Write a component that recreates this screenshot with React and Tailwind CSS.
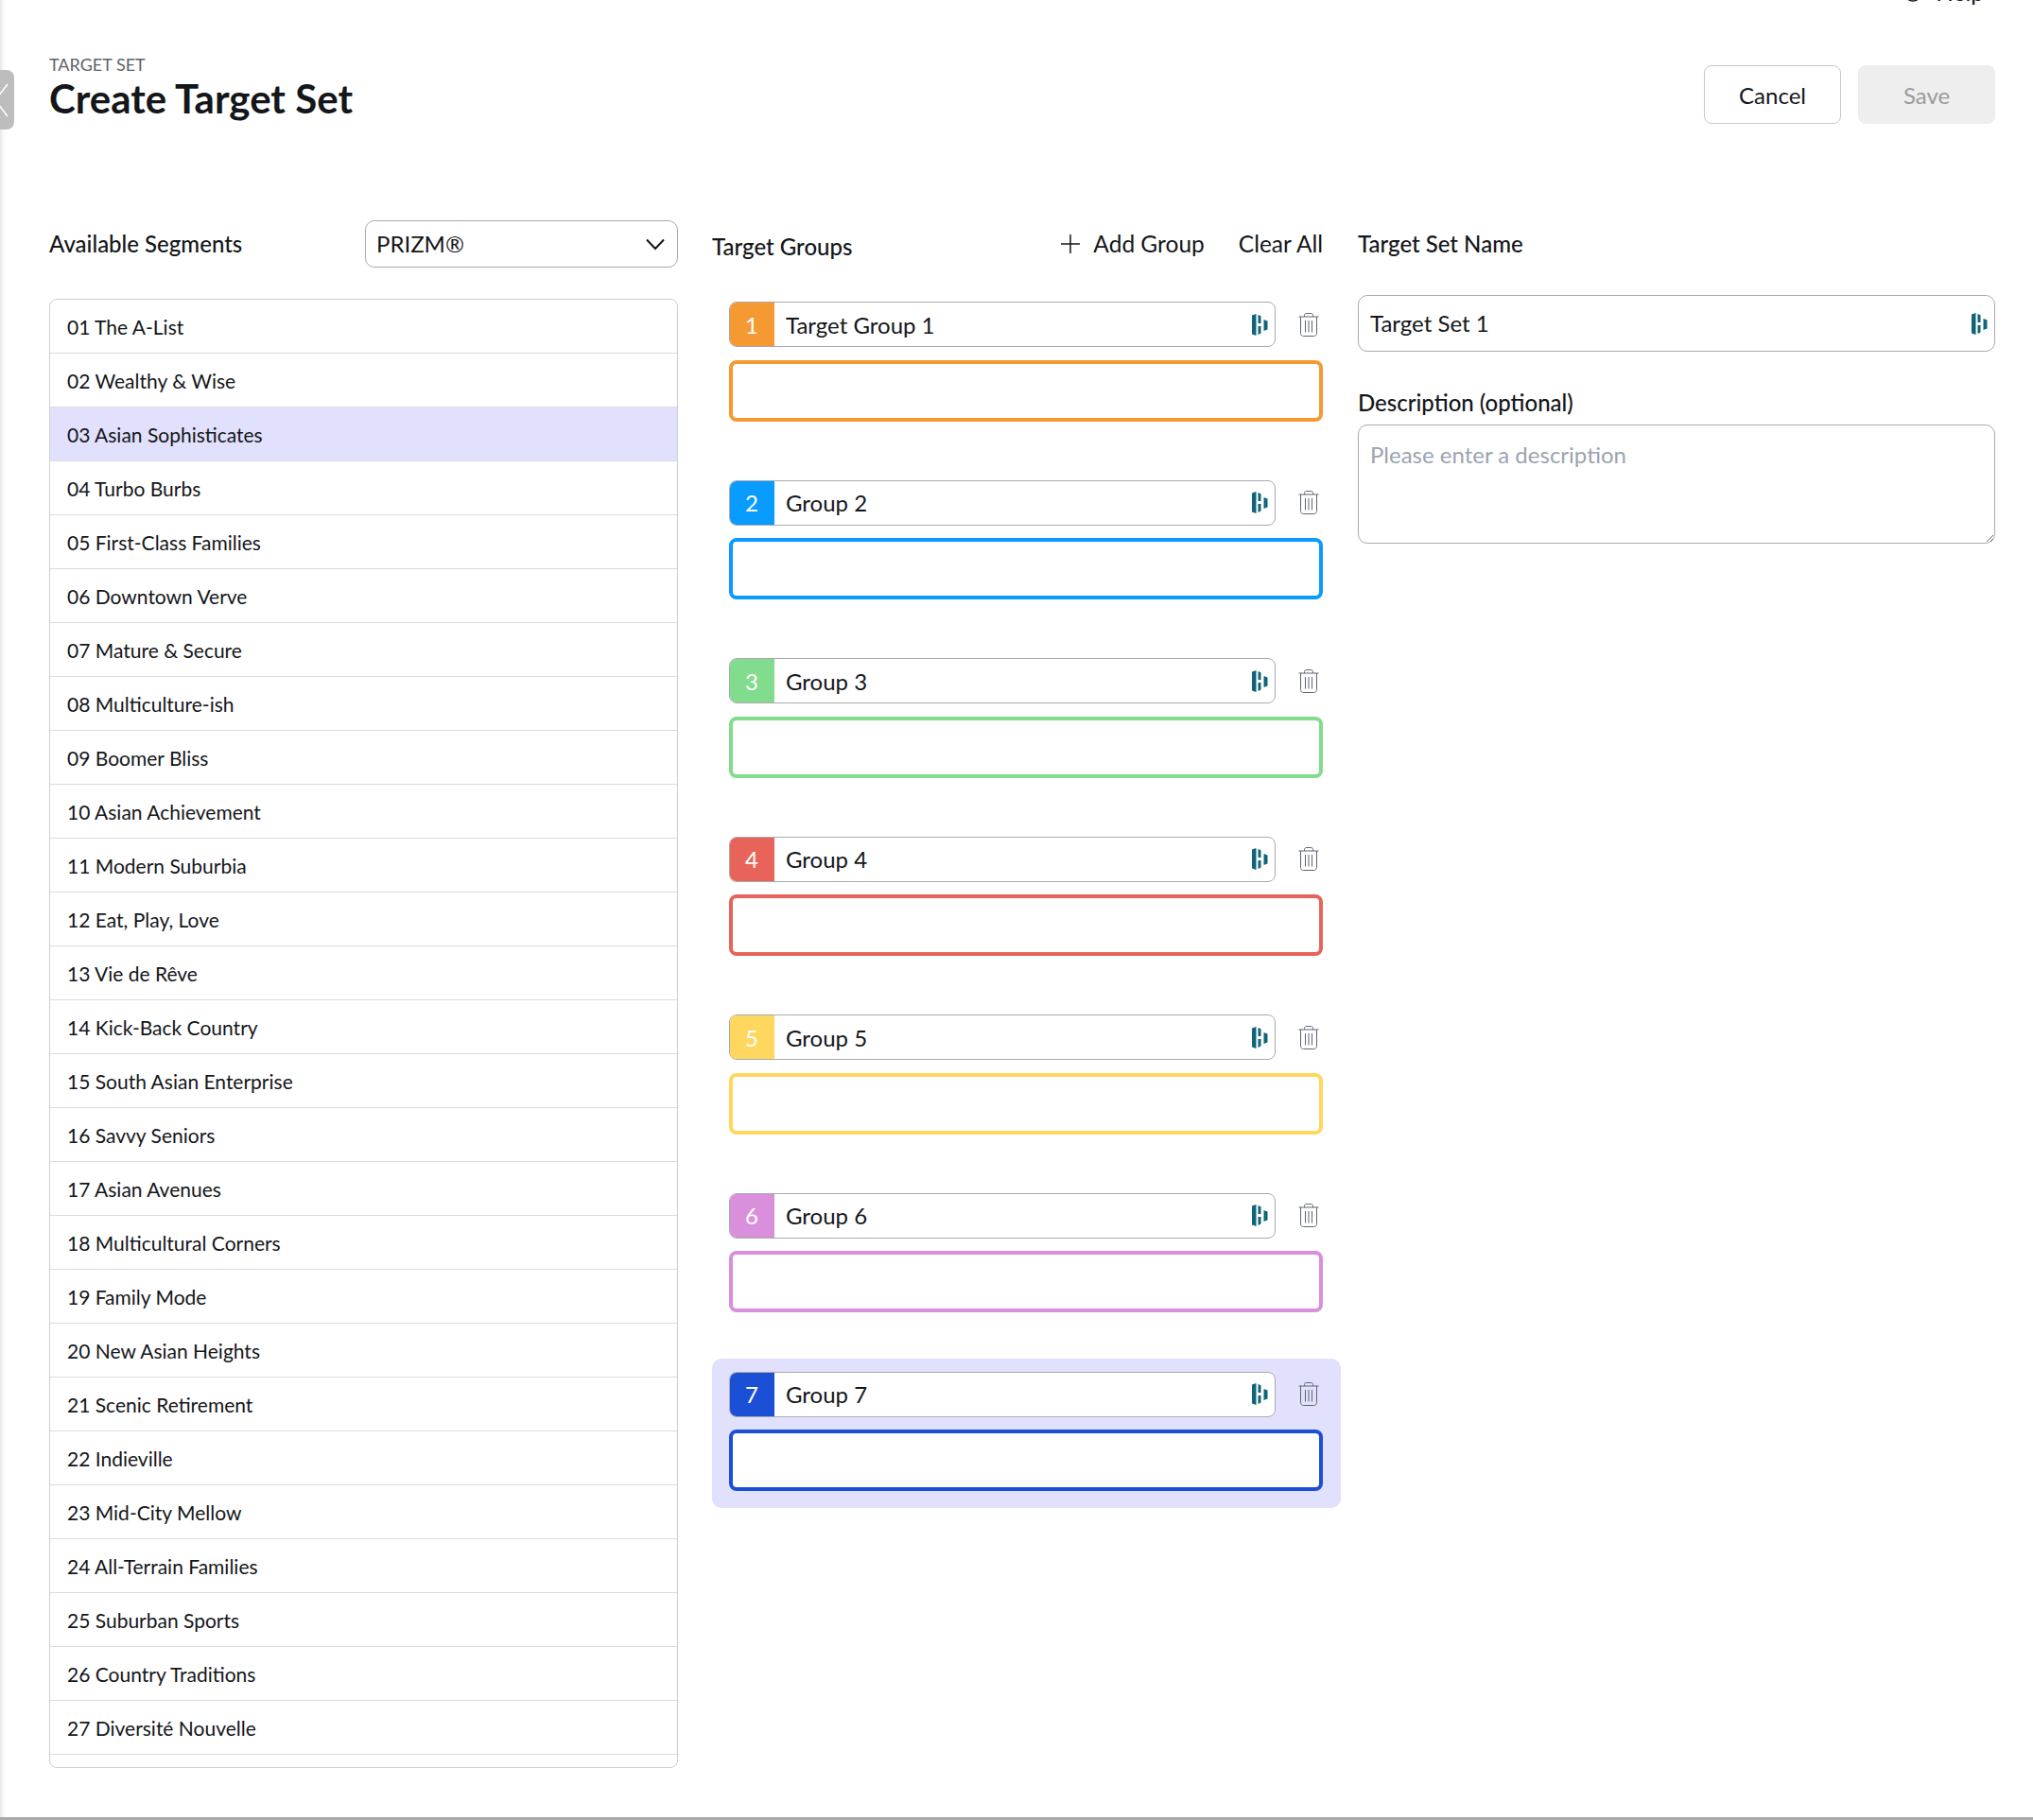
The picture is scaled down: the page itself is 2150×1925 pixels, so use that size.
const SEGMENTS = ["01 The A-List","02 Wealthy & Wise","03 Asian Sophisticates","04 Turbo Burbs","05 First-Class Families","06 Downtown Verve","07 Mature & Secure","08 Multiculture-ish","09 Boomer Bliss","10 Asian Achievement","11 Modern Suburbia","12 Eat, Play, Love","13 Vie de Rêve","14 Kick-Back Country","15 South Asian Enterprise","16 Savvy Seniors","17 Asian Avenues","18 Multicultural Corners","19 Family Mode","20 New Asian Heights","21 Scenic Retirement","22 Indieville","23 Mid-City Mellow","24 All-Terrain Families","25 Suburban Sports","26 Country Traditions","27 Diversité Nouvelle"];

const GROUPS = [
  { n: 1, name: "Target Group 1", badge: "bg-[#f59a32]", box: "border-[#f59a32]" },
  { n: 2, name: "Group 2", badge: "bg-[#0a9bff]", box: "border-[#0a9bff]" },
  { n: 3, name: "Group 3", badge: "bg-[#82dc8e]", box: "border-[#82dc8e]" },
  { n: 4, name: "Group 4", badge: "bg-[#e8645a]", box: "border-[#e8645a]" },
  { n: 5, name: "Group 5", badge: "bg-[#ffd75e]", box: "border-[#ffd75e]" },
  { n: 6, name: "Group 6", badge: "bg-[#d98fdc]", box: "border-[#d98fdc]" },
  { n: 7, name: "Group 7", badge: "bg-[#1a4fd6]", box: "border-[#1a4fd6]", active: true },
];

function BrandMark() {
  return (
    <svg width="17" height="23" viewBox="0 0 17 23" className="shrink-0">
      <g fill="#0f6577">
        <path d="M0 1.5 4.5 0v23L0 21.5z" />
        <path d="M6.5 1 9.5 2.2V10H6.5z" />
        <path d="M6.5 13H9.5v7.5L6.5 22z" />
        <path d="M12.5 6 16.5 7.5v9L12.5 18z" />
      </g>
    </svg>
  );
}

function Trash() {
  return (
    <svg width="22" height="25" viewBox="0 0 22 25" fill="none" stroke="#5f6470" strokeWidth="1" className="shrink-0">
      <path d="M0.5 4H21.5" />
      <path d="M6.5 4V2.5C6.5 1.4 7.4.5 8.5.5h5c1.1 0 2 .9 2 2V4" />
      <path d="M2.5 4V21.5c0 1.6 1.2 3 3 3h11c1.8 0 3-1.4 3-3V4" />
      <path d="M7.5 8V20.5M11 8V20.5M14.5 8V20.5" />
    </svg>
  );
}

function Group({ g }) {
  return (
    <div className={`h-[158px] rounded-[10px] px-[18px] pt-[14px] ${g.active ? "bg-[#e1e1fd]" : ""}`}>
      <div className="flex items-center">
        <div className="flex h-[48px] w-[578px] overflow-hidden rounded-[8px] border border-[#aaaaaa] bg-white">
          <div className={`-my-px -ml-px flex w-[48px] shrink-0 items-center justify-center pt-px text-[24px] text-white ${g.badge}`}>{g.n}</div>
          <div className="flex flex-1 items-center justify-between pl-[12px] pr-[7px]">
            <span className="pt-px text-[24px] text-[#14161a]">{g.name}</span>
            <BrandMark />
          </div>
        </div>
        <div className="ml-[24px]"><Trash /></div>
      </div>
      <div className={`mt-[13.5px] h-[65px] w-[628px] rounded-[8px] border-[4px] bg-white ${g.box}`} />
    </div>
  );
}

export default function App() {
  return (
    <div className="relative flex h-[1925px] w-[2150px] flex-col overflow-hidden border-b-[3px] border-[#a8a8a8] bg-white pl-[52px] pr-[40px] font-['Lato',sans-serif] text-[#14161a] shadow-[inset_5px_0_4px_-3px_#e4e4e4]">
      <div className="absolute left-0 top-[74px] flex h-[63px] w-[15px] items-center overflow-hidden rounded-r-[8px] bg-[#bdbdbd]">
        <svg width="15" height="40" viewBox="0 0 15 40" fill="none" stroke="#ffffff" strokeWidth="1.5"><path d="M8 3-5 20 8 37" /></svg>
      </div>

      <div className="flex h-[6px] items-end justify-end overflow-visible pr-[12px]">
        <div className="flex items-center gap-[14px] text-[24.5px] leading-[28px] text-[#14161a]">
          <svg width="20" height="20" viewBox="0 0 20 20" fill="none" stroke="#14161a" strokeWidth="1.5"><circle cx="10" cy="10" r="9" /></svg>
          <span>Help</span>
        </div>
      </div>

      <div className="mt-[51px] flex items-start justify-between">
        <div>
          <div className="text-[18px] leading-[22px] text-[#5f6368]">TARGET SET</div>
          <h1 className="text-[42px] font-bold leading-[50px] text-[#14161a]">Create Target Set</h1>
        </div>
        <div className="mt-[12px] flex gap-[18px]">
          <div className="flex h-[62px] w-[145px] items-center justify-center rounded-[8px] border border-[#c8c8c8] bg-white pt-px text-[24px]">Cancel</div>
          <div className="flex h-[62px] w-[145px] items-center justify-center rounded-[8px] bg-[#eeeeee] pt-px text-[24px] text-[#9a9a9a]">Save</div>
        </div>
      </div>

      <div className="mt-[102px] flex items-start">
        <div className="w-[665px] shrink-0">
          <div className="flex h-[50px] items-center justify-between">
            <span className="text-[24px] font-medium">Available Segments</span>
            <div className="flex h-[50px] w-[331px] items-center justify-between rounded-[10px] border border-[#aaaaaa] pl-[11px] pr-[13px] text-[24px]">
              <span>PRIZM®</span>
              <svg width="20" height="13" viewBox="0 0 20 13" fill="none" stroke="#14161a" strokeWidth="2"><path d="M1 1.5 10 11 19 1.5" /></svg>
            </div>
          </div>
          <div className="mt-[33px] h-[1554px] rounded-[8px] border border-[#cfcfcf]">
            {SEGMENTS.map((s, i) => (
              <div key={s} className={`flex h-[57px] items-center border-b border-[#dcdcdc] pl-[18px] pt-px text-[21px] text-[#14161a] ${i === 2 ? "bg-[#e1e1fd]" : ""}`}>{s}</div>
            ))}
          </div>
        </div>

        <div className="ml-[36px] w-[665px] shrink-0">
          <div className="flex h-[72px] items-start justify-between pl-0 pr-[19px]">
            <span className="mt-[10px] text-[24px] font-medium">Target Groups</span>
            <div className="mt-[7px] flex items-center text-[24.5px]">
              <svg width="20" height="20" viewBox="0 0 20 20" fill="none" stroke="#14161a" strokeWidth="1.5"><path d="M10 0V20M0 10H20" /></svg>
              <span className="ml-[14px]">Add Group</span>
              <span className="ml-[36px]">Clear All</span>
            </div>
          </div>
          <div className="flex flex-col gap-[30.6px]">
            {GROUPS.map((g) => <Group key={g.n} g={g} />)}
          </div>
        </div>

        <div className="ml-[18px] w-[674px] shrink-0">
          <div className="flex h-[50px] items-center text-[24px] font-medium">Target Set Name</div>
          <div className="mt-[29px] flex h-[60px] items-center justify-between rounded-[10px] border border-[#aaaaaa] pl-[12px] pr-[7px] text-[24px]">
            <span>Target Set 1</span>
            <BrandMark />
          </div>
          <div className="mt-[38px] text-[24px] font-medium leading-[32px]">Description (optional)</div>
          <textarea readOnly placeholder="Please enter a description" className="mt-[7px] block h-[126px] w-full rounded-[10px] border border-[#aaaaaa] px-[12px] pb-[16px] pt-[16px] text-[24px] leading-[30px] outline-none placeholder:text-[#9ca3af]" />
        </div>
      </div>
    </div>
  );
}
